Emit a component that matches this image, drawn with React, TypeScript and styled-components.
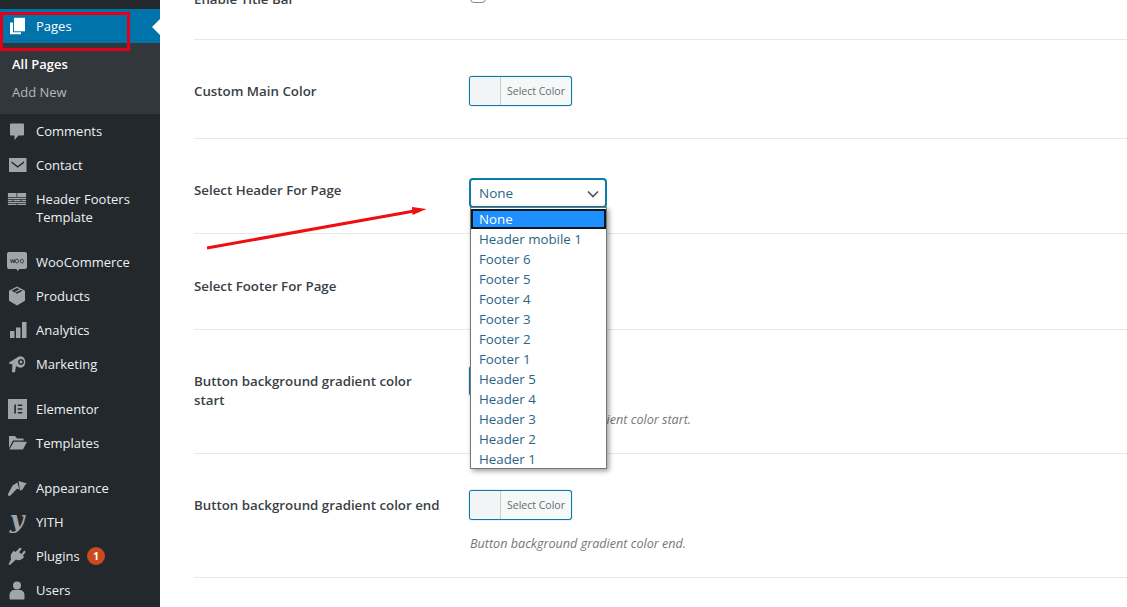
import React, { FC, ReactNode } from 'react'
import styled, { createGlobalStyle } from 'styled-components'

const GlobalStyle = createGlobalStyle`
  html, body {
    margin: 0;
    padding: 0;
    background: #fff;
  }

  body {
    font-family: 'Open Sans', 'Noto Sans', sans-serif;
    overflow: hidden;
  }
`

const Page = styled.div`
  position: relative;
  display: flex;
  width: 1127px;
  height: 607px;
  overflow: hidden;
  background: #fff;
`

const Sidebar = styled.nav`
  flex: 0 0 160px;
  background: #23282d;
  padding-top: 9px;
`

const TopStub = styled.div`
  height: 34px;
  margin-top: -34px;
  padding: 7px 0 0 7px;
  box-sizing: border-box;
`

const NavItem = styled.div<{ $active?: boolean; $tall?: boolean; $gapAfter?: boolean }>`
  position: relative;
  display: flex;
  align-items: flex-start;
  height: ${(p) => (p.$tall ? '52px' : '34px')};
  margin-bottom: ${(p) => (p.$gapAfter ? '11px' : '0')};
  padding: 7px 0 0 7px;
  box-sizing: border-box;
  background: ${(p) => (p.$active ? '#0073aa' : 'transparent')};
  color: ${(p) => (p.$active ? '#fff' : '#eef0f1')};
`

const NavIcon = styled.svg<{ $active?: boolean }>`
  flex: 0 0 20px;
  width: 20px;
  height: 20px;
  fill: ${(p) => (p.$active ? '#fff' : '#a0a5aa')};
`

const NavLabel = styled.span`
  margin-left: 9px;
  font-size: 13px;
  line-height: 18px;
  width: 112px;
  margin-top: 1px;
`

const Notch = styled.span`
  position: absolute;
  right: 0;
  top: 10px;
  border: 8px solid transparent;
  border-right-color: #fff;
  border-left-width: 0;
`

const Badge = styled.span`
  position: absolute;
  left: 87px;
  top: 8px;
  width: 18px;
  height: 18px;
  border-radius: 50%;
  background: #ca4a1f;
  color: #fff;
  font-size: 10px;
  font-weight: 700;
  line-height: 18px;
  text-align: center;
`

const Submenu = styled.div`
  background: #32373c;
  padding: 7px 0 8px;
`

const SubItem = styled.div<{ $current?: boolean }>`
  padding-left: 12px;
  font-size: 13px;
  line-height: 28px;
  font-weight: ${(p) => (p.$current ? 600 : 400)};
  color: ${(p) => (p.$current ? '#fff' : '#b4b9be')};
`

const Main = styled.main`
  flex: 1;
  margin-top: -52px;
  padding-left: 34px;
`

const Row = styled.section<{ $height: number }>`
  display: grid;
  grid-template-columns: 275px 1fr;
  height: ${(p) => p.$height}px;
  padding-top: 36px;
  border-bottom: 1px solid #e7e8e9;
`

const Label = styled.label<{ $drop?: number }>`
  padding-top: ${(p) => 6 + (p.$drop ?? 0)}px;
  width: 248px;
  font-size: 13.3px;
  line-height: 19px;
  font-weight: 600;
  color: #3a4046;
`

const Field = styled.div`
  display: flex;
  flex-direction: column;
  align-items: flex-start;
`

const Checkbox = styled.span`
  width: 16px;
  height: 16px;
  margin: 3px 0 0 1px;
  box-sizing: border-box;
  border: 1px solid #7e8993;
  border-radius: 4px;
  background: #fff;
`

const ColorButton = styled.div`
  display: flex;
  width: 103px;
  height: 30px;
  box-sizing: border-box;
  border: 1px solid #0f78a5;
  border-radius: 3px;
  box-shadow: 0 0 1px #0f78a5;
  overflow: hidden;
  background: #f6f7f7;
`

const Swatch = styled.span`
  flex: 0 0 30px;
  background: #f3f4f5;
  border-right: 1px solid #c9ccd0;
`

const ColorText = styled.span`
  flex: 1;
  font-size: 10.5px;
  line-height: 28px;
  text-align: center;
  color: #656c73;
`

const Description = styled.p`
  margin: 15px 0 0 1px;
  font-size: 12.6px;
  line-height: 18px;
  font-style: italic;
  color: #72777c;
`

const SelectBox = styled.div`
  position: relative;
  width: 138px;
  height: 30px;
  margin-top: 3px;
  box-sizing: border-box;
  padding-left: 8px;
  border: 2px solid #0c7cab;
  border-radius: 4px;
  font-size: 13.5px;
  line-height: 27px;
  color: #2a6587;
`

const Chevron = styled.svg`
  position: absolute;
  right: 5px;
  top: 7px;
  width: 14px;
  height: 14px;
  fill: none;
  stroke: #50575e;
  stroke-width: 1.7;
`

const Dropdown = styled.ul`
  position: absolute;
  left: -1px;
  top: 27px;
  z-index: 3;
  width: 137px;
  height: 262px;
  margin: 0;
  padding: 1px 0 0;
  box-sizing: border-box;
  list-style: none;
  background: #fff;
  border: 1px solid #767676;
  box-shadow: 2px 2px 5px rgba(0, 0, 0, 0.4);
`

const Option = styled.li<{ $selected?: boolean }>`
  height: 20px;
  box-sizing: border-box;
  padding-left: ${(p) => (p.$selected ? '6px' : '8px')};
  font-size: 13.3px;
  line-height: ${(p) => (p.$selected ? '16px' : '20px')};
  color: ${(p) => (p.$selected ? '#fff' : '#2a6587')};
  background: ${(p) => (p.$selected ? '#1e8fff' : 'transparent')};
  border: ${(p) => (p.$selected ? '2px solid #0b1725' : '0')};
`

const Highlight = styled.div`
  position: absolute;
  left: 0;
  top: 12px;
  width: 130px;
  height: 39px;
  box-sizing: border-box;
  border: 3px solid #e2001a;
  pointer-events: none;
`

const Arrow = styled.svg`
  position: absolute;
  left: 200px;
  top: 200px;
  width: 235px;
  height: 55px;
  pointer-events: none;
`

const YithGlyph = styled.span`
  flex: 0 0 20px;
  width: 20px;
  height: 20px;
  font-family: 'DejaVu Serif', serif;
  font-size: 25px;
  font-style: italic;
  font-weight: 700;
  line-height: 15px;
  text-align: center;
  color: #a0a5aa;
`

const icons: Record<string, ReactNode> = {
  stub: <path d="M6 -8h3v9H6zM12 -8h3v9h-3z" />,
  pages: (
    <>
      <path d="M7 1.800h11v13.500H7z" />
      <path d="M3 6.500h3v9.800h8v2H3z" />
    </>
  ),
  comments: (
    <path d="M4 2.500h12a1 1 0 0 1 1 1v10a1 1 0 0 1-1 1h-4.500L7.500 19v-4.500H4a1 1 0 0 1-1-1v-10a1 1 0 0 1 1-1z" />
  ),
  contact: (
    <path
      fillRule="evenodd"
      d="M2 3h17.500v14H2zM4.500 6.200l6.200 4.800 6.300-4.800v1.700l-6.300 4.900-6.200-4.900z"
    />
  ),
  bricks: (
    <path d="M1 1h9.500v4.200H1zM11.300 1H21v4.200h-9.700zM1 6h20v1.600H1zM1 8.400h5v1.500H1zM7 8.400h8v1.500H7zM16 8.400h5v1.500h-5zM1 10.700h20v1.300H1zM1 12.800h9.500V14H1zM11.300 12.800H21V14h-9.700z" />
  ),
  woo: (
    <>
      <path
        d="M2 1h16a2 2 0 0 1 2 2v13a2 2 0 0 1-2 2h-5.500l-2 2-1-2H2a2 2 0 0 1-2-2V3a2 2 0 0 1 2-2z"
        transform="translate(0 -1)"
      />
      <path
        d="M3.500 7l1 4 1.300-3.400 1.200 3.400 1-4M10 7.200a1.700 1.900 0 1 0 .01 0M15 7.200a1.700 1.900 0 1 0 .01 0"
        fill="none"
        stroke="#23282d"
        strokeWidth=".8"
      />
    </>
  ),
  products: (
    <path
      fillRule="evenodd"
      d="M10 .5l8 4.300v10L10 19.500 2 14.800v-10zM4.700 4.800L10 7.800l5.500-3L14 4l-5.300 2.600-1.300-.7L12.600 3.200 10 2z"
    />
  ),
  analytics: <path d="M3 11h4.500v7H3zM9 7.500h4.500V18H9zM15 2h4.500v16H15z" />,
  marketing: (
    <path
      fillRule="evenodd"
      d="M2 8.500l9-5.500c1.500-1.200 3.500-1 5 0 3 2 3 8 0 10-1.500 1-3.500 1-5 0l-2-.7-1 6H5l.4-7.700L2 9.500zM14 5a3 3 0 1 0 .01 0zM14 6.600a1.500 1.500 0 1 1-.01 0z"
    />
  ),
  elementor: (
    <path
      fillRule="evenodd"
      d="M0 0h20v20H0zM6.300 5.500v9h1.600v-9zM9.800 5.500v1.500h4.500V5.500zM9.800 9.200v1.500h4.500V9.200zM9.800 13v1.500h4.500V13z"
      transform="translate(1 0)"
    />
  ),
  templates: <path d="M2 3h6l2 2.500h6.500v2H6L2 15zM6.800 8.700H20L16 16.500H2.500z" />,
  appearance: (
    <path d="M11.500 3L20 5.500c-1.500 1-2.500 2-3 3.500-1 2.500-2.500 3.500-4 3.500zM10.400 4.500l2 7-2.400-.7-6.500 6.800c-1 1-3 .3-2.500-1.500l4.500-8.500z" />
  ),
  plugins: (
    <path d="M13 1.500l1.800 1.300-2.700 3.500 2.300 1.700 2.800-3.400 1.600 1.400-3 3.700 1.500 1.200-1.500 1.400c-2 2-4.600 2.500-6.800 1.200L3 19l-1.500-.7 2.700-5.300c-1-2.200-.6-5 1.300-6.800l1.400-1.400 1.600 1.300z" />
  ),
  users: (
    <>
      <circle cx="10" cy="5.500" r="4" />
      <path d="M2.500 18.500v-3.500c0-3 2.500-5 4.500-5h6c2 0 4.500 2 4.500 5v3.500c0 .5-.5 1-1 1h-13c-.5 0-1-.5-1-1z" />
    </>
  )
}

type MenuEntry = {
  label: ReactNode
  icon: string
  tall?: boolean
  gapAfter?: boolean
  badge?: string
}

const menu: MenuEntry[] = [
  { label: 'Comments', icon: 'comments' },
  { label: 'Contact', icon: 'contact' },
  { label: 'Header Footers Template', icon: 'bricks', tall: true, gapAfter: true },
  { label: 'WooCommerce', icon: 'woo' },
  { label: 'Products', icon: 'products' },
  { label: 'Analytics', icon: 'analytics' },
  { label: 'Marketing', icon: 'marketing', gapAfter: true },
  { label: 'Elementor', icon: 'elementor' },
  { label: 'Templates', icon: 'templates', gapAfter: true },
  { label: 'Appearance', icon: 'appearance' },
  { label: 'YITH', icon: 'yith' },
  { label: 'Plugins', icon: 'plugins', badge: '1' },
  { label: 'Users', icon: 'users' }
]

const options = [
  'None',
  'Header mobile 1',
  'Footer 6',
  'Footer 5',
  'Footer 4',
  'Footer 3',
  'Footer 2',
  'Footer 1',
  'Header 5',
  'Header 4',
  'Header 3',
  'Header 2',
  'Header 1'
]

const ColorPicker: FC = () => (
  <ColorButton>
    <Swatch />
    <ColorText>Select Color</ColorText>
  </ColorButton>
)

const App: FC = () => {
  return (
    <Page>
      <GlobalStyle />
      <Sidebar>
        <TopStub>
          <NavIcon viewBox="0 0 20 20">{icons.stub}</NavIcon>
        </TopStub>
        <NavItem $active>
          <NavIcon viewBox="0 0 20 20" $active>
            {icons.pages}
          </NavIcon>
          <NavLabel>Pages</NavLabel>
          <Notch />
        </NavItem>
        <Submenu>
          <SubItem $current>All Pages</SubItem>
          <SubItem>Add New</SubItem>
        </Submenu>
        {menu.map((item) => (
          <NavItem key={item.icon} $tall={item.tall} $gapAfter={item.gapAfter}>
            {item.icon === 'yith' ? (
              <YithGlyph>y</YithGlyph>
            ) : (
              <NavIcon
                viewBox={item.icon === 'bricks' ? '0 0 22 15' : '0 0 20 20'}
              >
                {icons[item.icon]}
              </NavIcon>
            )}
            <NavLabel>{item.label}</NavLabel>
            {item.badge ? <Badge>{item.badge}</Badge> : null}
          </NavItem>
        ))}
      </Sidebar>

      <Main>
        <Row $height={55}>
          <Label>Enable Title Bar</Label>
          <Field>
            <Checkbox />
          </Field>
        </Row>
        <Row $height={62}>
          <Label>Custom Main Color</Label>
          <Field>
            <ColorPicker />
          </Field>
        </Row>
        <Row $height={58}>
          <Label>Select Header For Page</Label>
          <Field>
            <SelectBox>
              None
              <Chevron viewBox="0 0 14 14">
                <path d="M2 4.500l5 5 5-5" />
              </Chevron>
              <Dropdown>
                {options.map((option, index) => (
                  <Option key={option} $selected={index === 0}>
                    {option}
                  </Option>
                ))}
              </Dropdown>
            </SelectBox>
          </Field>
        </Row>
        <Row $height={59}>
          <Label $drop={1}>Select Footer For Page</Label>
          <Field />
        </Row>
        <Row $height={87}>
          <Label>Button background gradient color start</Label>
          <Field>
            <ColorPicker />
            <Description>Button background gradient color start.</Description>
          </Field>
        </Row>
        <Row $height={87}>
          <Label>Button background gradient color end</Label>
          <Field>
            <ColorPicker />
            <Description>Button background gradient color end.</Description>
          </Field>
        </Row>
      </Main>

      <Highlight />
      <Arrow viewBox="0 0 235 55">
        <path d="M7 48L213 11.300" fill="none" stroke="#ee0f10" strokeWidth="3" />
        <path d="M212 7l14.500 2-14 6z" fill="#ee0f10" />
      </Arrow>
    </Page>
  )
}

export default App
